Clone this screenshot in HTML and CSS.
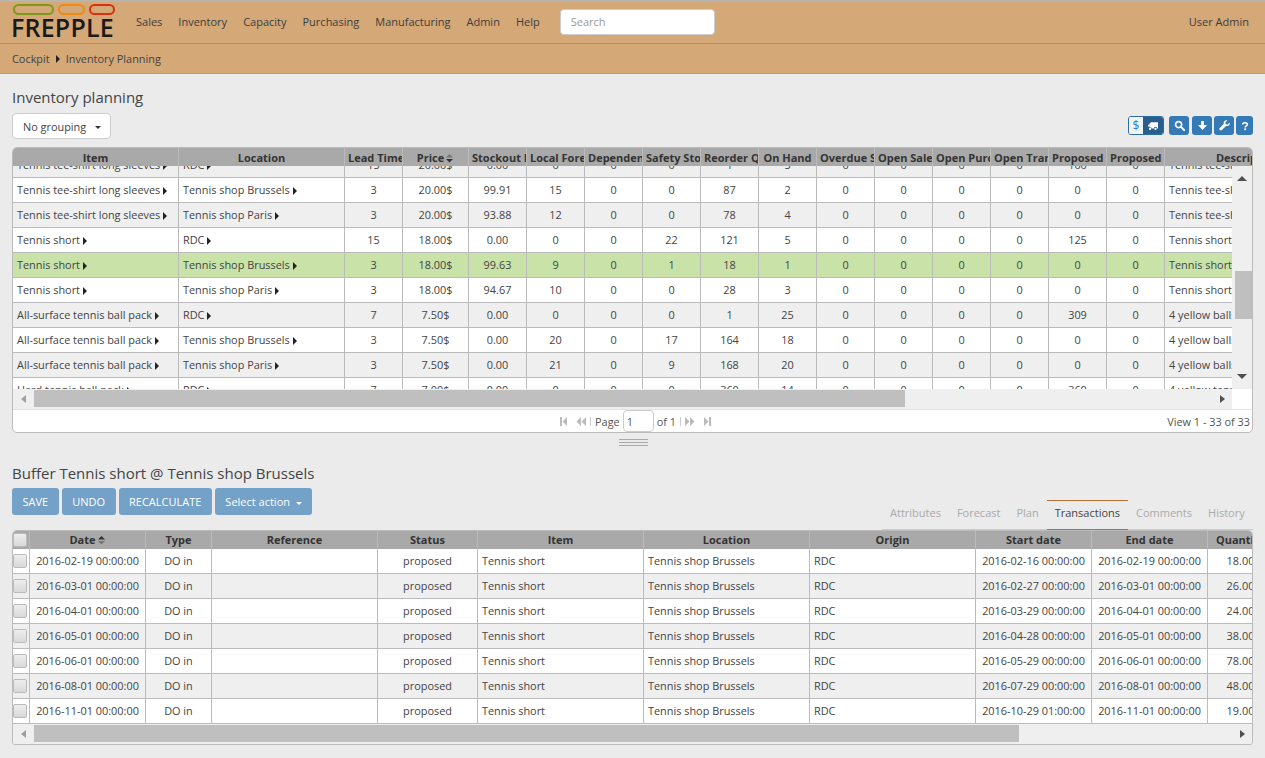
FILE: index.html
```html
<!DOCTYPE html>
<html lang="en">
<head>
    <meta charset="UTF-8">
    <title>Inventory planning</title>
    <link rel="stylesheet" href="styles.css">
</head>
<body>
    <header class="topbar">
        <nav class="navbar">
            <a class="logo">
                <span class="logo-pills"><i class="pill green"></i><i class="pill orange"></i><i class="pill red"></i></span>
                <span class="logo-text">FREPPLE</span>
            </a>
            <a class="nav-link">Sales</a>
            <a class="nav-link">Inventory</a>
            <a class="nav-link">Capacity</a>
            <a class="nav-link">Purchasing</a>
            <a class="nav-link">Manufacturing</a>
            <a class="nav-link">Admin</a>
            <a class="nav-link">Help</a>
            <input class="search" type="text" placeholder="Search">
            <a class="nav-user">User Admin</a>
        </nav>
        <div class="breadcrumb">
            <span>Cockpit</span>
            <i class="more"></i>
            <span>Inventory Planning</span>
        </div>
    </header>

    <main class="content">
        <h1 class="title">Inventory planning</h1>
        <div class="toolbar">
            <button class="btn-default">No grouping <i class="caret"></i></button>
            <div class="actions">
                <div class="toggle">
                    <span class="toggle-off">$</span>
                    <span class="toggle-on">
                        <svg width="12" height="10" viewBox="0 0 14 12"><path fill="#fff" d="M4 1.500h9v7.500h-1a2 2 0 0 0-4 0H5.500a2 2 0 0 0-2.500-1.200V6.500H1V5l2-2h1zM3 3.800 1.800 5H3zM3.500 8a1.400 1.400 0 1 1 0 2.800 1.400 1.400 0 0 1 0-2.800zM10 8a1.400 1.400 0 1 1 0 2.800A1.400 1.400 0 0 1 10 8z"/></svg>
                    </span>
                </div>
                <span class="icon-btn wide search-btn">
                    <svg width="11" height="11" viewBox="0 0 12 12"><circle cx="5" cy="5" r="3.300" fill="none" stroke="#fff" stroke-width="1.800"/><path d="M7.500 7.500 11 11" stroke="#fff" stroke-width="2.200" stroke-linecap="round"/></svg>
                </span>
                <span class="icon-btn wide">
                    <svg width="11" height="11" viewBox="0 0 12 12"><path fill="#fff" d="M4.500 1h3v4.500H11L6 11 1 5.500h3.500z"/></svg>
                </span>
                <span class="icon-btn wide">
                    <svg width="11" height="11" viewBox="0 0 12 12"><path fill="#fff" d="M11.500 2.800 9.400 4.900 7.400 4.500 7 2.600 9.100.5C7.500-.1 5.600.8 5.200 2.400c-.1.600-.1 1.200.1 1.800L.8 8.700c-.6.600-.6 1.600 0 2.200.6.700 1.700.7 2.300.1l4.600-4.500c1.900.6 3.700-.4 4-2.100.1-.5 0-1.100-.2-1.600z"/></svg>
                </span>
                <span class="icon-btn">
                    <svg width="8" height="10" viewBox="0 0 10 12"><path fill="none" stroke="#fff" stroke-width="2" d="M2 4.200C2 2.700 3.300 2 5 2s3 .8 3 2.200C8 6 5.200 5.800 5.200 7.800"/><rect x="4" y="9" width="2.400" height="2.200" fill="#fff"/></svg>
                </span>
            </div>
        </div>

        <section class="grid">
            <table class="grid-table grid-head top-table">
                <colgroup><col class="c-name"><col class="c-name"><col class="c-lead"><col class="c-price"><col class="c-num"><col class="c-num"><col class="c-num"><col class="c-num"><col class="c-num"><col class="c-num"><col class="c-num"><col class="c-num"><col class="c-num"><col class="c-num"><col class="c-num"><col class="c-num"><col class="c-name"></colgroup>
                <tr>
                    <th>Item</th><th>Location</th><th>Lead Time</th>
                    <th>Price<svg class="sort" width="9" height="9" viewBox="0 0 9 9"><path fill="#777" d="M1 3.500 4.500 0 8 3.500z"/><path fill="#333" d="M1 5h7L4.500 8.500z"/></svg></th>
                    <th>Stockout Probability</th><th>Local Forecast</th><th>Dependent Demand</th><th>Safety Stock</th><th>Reorder Quantity</th><th>On Hand</th><th>Overdue Sales</th><th>Open Sales</th><th>Open Purchases</th><th>Open Transfers</th><th>Proposed</th><th>Proposed</th><th>Description</th>
                </tr>
            </table>
            <div class="grid-body">
                <div class="viewport">
                    <table class="grid-table top-table scrolled">
                        <colgroup><col class="c-name"><col class="c-name"><col class="c-lead"><col class="c-price"><col class="c-num"><col class="c-num"><col class="c-num"><col class="c-num"><col class="c-num"><col class="c-num"><col class="c-num"><col class="c-num"><col class="c-num"><col class="c-num"><col class="c-num"><col class="c-num"><col class="c-name"></colgroup>
                        <tr class="alt"><td class="left">Tennis tee-shirt long sleeves <i class="more"></i></td><td class="left">RDC <i class="more"></i></td><td>15</td><td>20.00$</td><td>0.00</td><td>0</td><td>0</td><td>0</td><td>1</td><td>5</td><td>0</td><td>0</td><td>0</td><td>0</td><td>100</td><td>0</td><td class="left">Tennis tee-shirt long sleeves</td></tr>
                        <tr><td class="left">Tennis tee-shirt long sleeves <i class="more"></i></td><td class="left">Tennis shop Brussels <i class="more"></i></td><td>3</td><td>20.00$</td><td>99.91</td><td>15</td><td>0</td><td>0</td><td>87</td><td>2</td><td>0</td><td>0</td><td>0</td><td>0</td><td>0</td><td>0</td><td class="left">Tennis tee-shirt long sleeves</td></tr>
                        <tr class="alt"><td class="left">Tennis tee-shirt long sleeves <i class="more"></i></td><td class="left">Tennis shop Paris <i class="more"></i></td><td>3</td><td>20.00$</td><td>93.88</td><td>12</td><td>0</td><td>0</td><td>78</td><td>4</td><td>0</td><td>0</td><td>0</td><td>0</td><td>0</td><td>0</td><td class="left">Tennis tee-shirt long sleeves</td></tr>
                        <tr><td class="left">Tennis short <i class="more"></i></td><td class="left">RDC <i class="more"></i></td><td>15</td><td>18.00$</td><td>0.00</td><td>0</td><td>0</td><td>22</td><td>121</td><td>5</td><td>0</td><td>0</td><td>0</td><td>0</td><td>125</td><td>0</td><td class="left">Tennis short</td></tr>
                        <tr class="selected"><td class="left">Tennis short <i class="more"></i></td><td class="left">Tennis shop Brussels <i class="more"></i></td><td>3</td><td>18.00$</td><td>99.63</td><td>9</td><td>0</td><td>1</td><td>18</td><td>1</td><td>0</td><td>0</td><td>0</td><td>0</td><td>0</td><td>0</td><td class="left">Tennis short</td></tr>
                        <tr><td class="left">Tennis short <i class="more"></i></td><td class="left">Tennis shop Paris <i class="more"></i></td><td>3</td><td>18.00$</td><td>94.67</td><td>10</td><td>0</td><td>0</td><td>28</td><td>3</td><td>0</td><td>0</td><td>0</td><td>0</td><td>0</td><td>0</td><td class="left">Tennis short</td></tr>
                        <tr class="alt"><td class="left">All-surface tennis ball pack <i class="more"></i></td><td class="left">RDC <i class="more"></i></td><td>7</td><td>7.50$</td><td>0.00</td><td>0</td><td>0</td><td>0</td><td>1</td><td>25</td><td>0</td><td>0</td><td>0</td><td>0</td><td>309</td><td>0</td><td class="left">4 yellow balls in a pack</td></tr>
                        <tr><td class="left">All-surface tennis ball pack <i class="more"></i></td><td class="left">Tennis shop Brussels <i class="more"></i></td><td>3</td><td>7.50$</td><td>0.00</td><td>20</td><td>0</td><td>17</td><td>164</td><td>18</td><td>0</td><td>0</td><td>0</td><td>0</td><td>0</td><td>0</td><td class="left">4 yellow balls in a pack</td></tr>
                        <tr class="alt"><td class="left">All-surface tennis ball pack <i class="more"></i></td><td class="left">Tennis shop Paris <i class="more"></i></td><td>3</td><td>7.50$</td><td>0.00</td><td>21</td><td>0</td><td>9</td><td>168</td><td>20</td><td>0</td><td>0</td><td>0</td><td>0</td><td>0</td><td>0</td><td class="left">4 yellow balls in a pack</td></tr>
                        <tr><td class="left">Hard tennis ball pack <i class="more"></i></td><td class="left">RDC <i class="more"></i></td><td>7</td><td>7.00$</td><td>0.00</td><td>0</td><td>0</td><td>0</td><td>360</td><td>14</td><td>0</td><td>0</td><td>0</td><td>0</td><td>360</td><td>0</td><td class="left">4 yellow tennis balls</td></tr>
                    </table>
                </div>
                <div class="vbar">
                    <span class="sb-btn"><i class="arrow up"></i></span>
                    <span class="vthumb"></span>
                    <span class="sb-btn end"><i class="arrow down"></i></span>
                </div>
            </div>
            <div class="hrow">
                <div class="hbar">
                    <span class="sb-btn side"><i class="arrow left"></i></span>
                    <span class="hthumb top-thumb"></span>
                    <span class="sb-btn side end-x"><i class="arrow right"></i></span>
                </div>
                <div class="corner"></div>
            </div>
            <div class="pager">
                <span></span>
                <div class="pager-center">
                    <svg width="7" height="9" viewBox="0 0 7 9"><path fill="#bbb" d="M0 0h2v9H0zM7 0v9L2.500 4.500z"/></svg>
                    <svg class="gap-l" width="10" height="9" viewBox="0 0 10 9"><path fill="#bbb" d="M5 0v9L.5 4.500zM10 0v9L5.500 4.500z"/></svg>
                    <i class="pager-sep"></i>
                    <span>Page</span>
                    <input class="page-input" type="text" value="1">
                    <span>of 1</span>
                    <i class="pager-sep"></i>
                    <svg width="10" height="9" viewBox="0 0 10 9"><path fill="#bbb" d="M0 0v9l4.500-4.500zM5 0v9l4.500-4.500z"/></svg>
                    <svg class="gap-l" width="7" height="9" viewBox="0 0 7 9"><path fill="#bbb" d="M0 0v9l4.500-4.500zM5 0h2v9H5z"/></svg>
                </div>
                <span class="pager-info">View 1 - 33 of 33</span>
            </div>
        </section>

        <div class="splitter"></div>

        <h2 class="title">Buffer Tennis short @ Tennis shop Brussels</h2>
        <div class="detail-bar">
            <div class="buttons">
                <button class="btn-primary">SAVE</button>
                <button class="btn-primary">UNDO</button>
                <button class="btn-primary">RECALCULATE</button>
                <button class="btn-primary">Select action <i class="caret white"></i></button>
            </div>
            <ul class="tabs">
                <li>Attributes</li>
                <li>Forecast</li>
                <li>Plan</li>
                <li class="active">Transactions</li>
                <li>Comments</li>
                <li>History</li>
            </ul>
        </div>

        <section class="grid detail">
            <table class="grid-table grid-head detail-table">
                <colgroup><col class="c-check"><col class="c-date"><col class="c-type"><col class="c-name"><col class="c-status"><col class="c-name"><col class="c-name"><col class="c-name"><col class="c-date"><col class="c-date"><col class="c-type"></colgroup>
                <tr>
                    <th class="check-cell"><i class="checkbox"></i></th>
                    <th>Date<svg class="sort" width="9" height="9" viewBox="0 0 9 9"><path fill="#333" d="M1 3.500 4.500 0 8 3.500z"/><path fill="#777" d="M1 5h7L4.500 8.500z"/></svg></th>
                    <th>Type</th><th>Reference</th><th>Status</th><th>Item</th><th>Location</th><th>Origin</th><th>Start date</th><th>End date</th><th>Quantity</th>
                </tr>
            </table>
            <table class="grid-table detail-table">
                <colgroup><col class="c-check"><col class="c-date"><col class="c-type"><col class="c-name"><col class="c-status"><col class="c-name"><col class="c-name"><col class="c-name"><col class="c-date"><col class="c-date"><col class="c-type"></colgroup>
                <tr><td class="check-cell"><i class="checkbox"></i></td><td>2016-02-19 00:00:00</td><td>DO in</td><td></td><td>proposed</td><td class="left">Tennis short</td><td class="left">Tennis shop Brussels</td><td class="left">RDC</td><td>2016-02-16 00:00:00</td><td>2016-02-19 00:00:00</td><td>18.00</td></tr>
                <tr class="alt"><td class="check-cell"><i class="checkbox"></i></td><td>2016-03-01 00:00:00</td><td>DO in</td><td></td><td>proposed</td><td class="left">Tennis short</td><td class="left">Tennis shop Brussels</td><td class="left">RDC</td><td>2016-02-27 00:00:00</td><td>2016-03-01 00:00:00</td><td>26.00</td></tr>
                <tr><td class="check-cell"><i class="checkbox"></i></td><td>2016-04-01 00:00:00</td><td>DO in</td><td></td><td>proposed</td><td class="left">Tennis short</td><td class="left">Tennis shop Brussels</td><td class="left">RDC</td><td>2016-03-29 00:00:00</td><td>2016-04-01 00:00:00</td><td>24.00</td></tr>
                <tr class="alt"><td class="check-cell"><i class="checkbox"></i></td><td>2016-05-01 00:00:00</td><td>DO in</td><td></td><td>proposed</td><td class="left">Tennis short</td><td class="left">Tennis shop Brussels</td><td class="left">RDC</td><td>2016-04-28 00:00:00</td><td>2016-05-01 00:00:00</td><td>38.00</td></tr>
                <tr><td class="check-cell"><i class="checkbox"></i></td><td>2016-06-01 00:00:00</td><td>DO in</td><td></td><td>proposed</td><td class="left">Tennis short</td><td class="left">Tennis shop Brussels</td><td class="left">RDC</td><td>2016-05-29 00:00:00</td><td>2016-06-01 00:00:00</td><td>78.00</td></tr>
                <tr class="alt"><td class="check-cell"><i class="checkbox"></i></td><td>2016-08-01 00:00:00</td><td>DO in</td><td></td><td>proposed</td><td class="left">Tennis short</td><td class="left">Tennis shop Brussels</td><td class="left">RDC</td><td>2016-07-29 00:00:00</td><td>2016-08-01 00:00:00</td><td>48.00</td></tr>
                <tr><td class="check-cell"><i class="checkbox"></i></td><td>2016-11-01 00:00:00</td><td>DO in</td><td></td><td>proposed</td><td class="left">Tennis short</td><td class="left">Tennis shop Brussels</td><td class="left">RDC</td><td>2016-10-29 01:00:00</td><td>2016-11-01 00:00:00</td><td>19.00</td></tr>
            </table>
            <div class="hbar full">
                <span class="sb-btn side"><i class="arrow left"></i></span>
                <span class="hthumb detail-thumb"></span>
                <span class="sb-btn side end-x"><i class="arrow right"></i></span>
            </div>
        </section>
    </main>
</body>
</html>
```

FILE: styles.css
```css
* {
    box-sizing: border-box;
}

body {
    margin: 0;
    height: 758px;
    overflow: hidden;
    background: #ebebeb;
    color: #333;
    font-family: "Open Sans", "Liberation Sans", sans-serif;
    font-size: 10.9px;
}

/* top bar */
.topbar {
    background: #d4a877;
    border-top: 2px solid #b8b4ae;
}

.navbar {
    display: flex;
    align-items: center;
    height: 42px;
    padding: 0 16px 2px 12px;
    border-bottom: 1px solid #c68b4f;
    font-size: 11px;
}

.logo {
    display: flex;
    flex-direction: column;
    width: 103px;
    margin-right: 21px;
}

.logo-pills {
    display: flex;
    gap: 4px;
    padding-left: 1px;
    height: 11px;
    margin-bottom: 1px;
}

.pill {
    display: block;
    height: 11px;
    border-radius: 6px;
    border: 2px solid;
}

.pill.green { width: 41px; border-color: #7c9a1a; }
.pill.orange { width: 28px; border-color: #ef8a12; }
.pill.red { width: 26px; border-color: #d9310f; }

.logo-text {
    margin-left: -1px;
    font-family: "Open Sans", sans-serif;
    font-size: 25px;
    font-weight: 600;
    line-height: 23px;
    letter-spacing: .2px;
    color: #1a1a1a;
}

.nav-link {
    margin-right: 16px;
    color: #3d3d3d;
}

.search {
    width: 155px;
    height: 26px;
    margin-left: 4px;
    padding: 0 10px;
    border: 1px solid #ccc;
    border-radius: 4px;
    background: #fff;
    font: inherit;
}

.search::placeholder {
    color: #999;
}

.nav-user {
    margin-left: auto;
    color: #3d3d3d;
}

.breadcrumb {
    display: flex;
    align-items: center;
    gap: 6px;
    height: 30px;
    padding-left: 12px;
    border-bottom: 1px solid #d09a5f;
    color: #444;
}

.more {
    display: inline-block;
    width: 0;
    height: 0;
    border-left: 4px solid #222;
    border-top: 4px solid transparent;
    border-bottom: 4px solid transparent;
    vertical-align: -1px;
}

/* page */
.content {
    padding: 0 12px;
}

.title {
    margin: 0;
    font-size: 15px;
    font-weight: 400;
    line-height: 20px;
    color: #444;
}

h1.title {
    padding-top: 13px;
    margin-bottom: 6px;
}

h2.title {
    margin-bottom: 5px;
}

.toolbar {
    display: flex;
    justify-content: space-between;
    height: 26px;
    margin-bottom: 8px;
}

button {
    font: inherit;
}

.btn-default {
    width: 99px;
    height: 26px;
    padding: 0 0 0 10px;
    border: 1px solid #ccc;
    border-radius: 4px;
    background: #fff;
    color: #444;
    text-align: left;
}

.caret {
    display: inline-block;
    width: 0;
    height: 0;
    margin-left: 6px;
    border-top: 3px solid #333;
    border-left: 3px solid transparent;
    border-right: 3px solid transparent;
    vertical-align: middle;
}

.caret.white {
    margin-left: 3px;
    border-top-color: #fff;
}

.actions {
    display: flex;
    align-items: flex-start;
    gap: 2px;
    margin-top: 3px;
}

.toggle {
    display: flex;
    height: 19px;
    margin-right: 3px;
    border: 1px solid #2e6da4;
    border-radius: 3px;
    overflow: hidden;
}

.toggle-off {
    width: 14px;
    background: #f2f5f8;
    color: #337ab7;
    font-size: 12px;
    line-height: 17px;
    text-align: center;
}

.toggle-on {
    display: flex;
    align-items: center;
    justify-content: center;
    width: 20px;
    background: #285e8e;
}

.icon-btn {
    display: flex;
    align-items: center;
    justify-content: center;
    width: 17px;
    height: 19px;
    background: #337ab7;
    border-radius: 3px;
}

.icon-btn.wide {
    width: 20px;
}

.search-btn {
    margin-right: 1px;
}

/* grids */
.grid {
    width: 1241px;
    border: 1px solid #bbb;
    border-radius: 5px;
    background: #fff;
    overflow: hidden;
}

.grid-table {
    border-collapse: separate;
    border-spacing: 0;
    table-layout: fixed;
}

.top-table { width: 1318px; }
.detail-table { width: 1261px; }

.c-name { width: 166px; }
.c-lead { width: 58px; }
.c-price { width: 66px; }
.c-num { width: 58px; }
.c-check { width: 17px; }
.c-date { width: 116px; }
.c-type { width: 66px; }
.c-status { width: 100px; }

.grid-table th {
    height: 18px;
    padding: 0 3px;
    background: #a9a9a9;
    border-right: 1px solid #bbb;
    color: #333;
    font-size: 11px;
    font-weight: 700;
    line-height: 18px;
    white-space: nowrap;
    overflow: hidden;
}

.top-table th {
    padding-top: 1px;
    line-height: 17px;
}

.grid-table td {
    height: 25px;
    padding: 0 3px 2px 3px;
    background: #fff;
    border-right: 1px solid #bbb;
    border-bottom: 1px solid #bbb;
    color: #444;
    text-align: center;
    white-space: nowrap;
    overflow: hidden;
}

.grid-table tr.alt td {
    background: #efefef;
}

.grid-table tr.selected td {
    background: #c8e2a8;
}

.grid-table td.left {
    padding-left: 4px;
    text-align: left;
}

.grid-table .check-cell {
    padding: 0;
    text-align: left;
}

.checkbox {
    display: block;
    width: 14px;
    height: 14px;
    border: 1px solid #bbb;
    border-radius: 2px;
    background: linear-gradient(#eee, #d8d8d8);
}

.sort {
    margin-left: 1px;
    vertical-align: -1px;
}

.grid-body {
    display: flex;
    height: 223px;
}

.viewport {
    width: 1219px;
    overflow: hidden;
}

.scrolled {
    margin-top: -13px;
}

/* hand drawn scrollbars */
.vbar {
    display: flex;
    flex-direction: column;
    width: 20px;
    background: #efefef;
}

.sb-btn {
    display: flex;
    align-items: center;
    justify-content: center;
    height: 24px;
    flex: none;
}

.sb-btn.end {
    margin-top: auto;
    margin-bottom: 1px;
}

.sb-btn.side {
    width: 21px;
    height: 20px;
}

.sb-btn.end-x {
    width: 20px;
    margin-left: auto;
}

.vthumb {
    width: 17px;
    height: 48px;
    margin: 81px 0 0 3px;
    background: #bfbfbf;
}

.arrow {
    display: block;
    width: 0;
    height: 0;
    border-style: solid;
    border-color: transparent;
}

.arrow.up { border-width: 0 5px 5px; border-bottom-color: #505050; }
.arrow.down { border-width: 5px 5px 0; border-top-color: #505050; }
.arrow.left { border-width: 4.500px 5px 4.500px 0; border-right-color: #a0a0a0; }
.arrow.right { border-width: 4.500px 0 4.500px 5px; border-left-color: #505050; }

.hrow {
    display: flex;
    height: 20px;
}

.hbar {
    display: flex;
    width: 1219px;
    height: 20px;
    background: #efefef;
}

.hbar.full {
    width: 100%;
}

.corner {
    width: 20px;
    background: #fff;
}

.hthumb {
    height: 17px;
    margin-top: 1px;
    background: #bfbfbf;
}

.top-thumb { width: 871px; }
.detail-thumb { width: 985px; }

.pager {
    display: grid;
    grid-template-columns: 1fr auto 1fr;
    align-items: center;
    height: 23px;
    border-top: 1px solid #e4e4e4;
    color: #555;
}

.pager-center {
    display: flex;
    align-items: center;
    gap: 3px;
    margin-left: 6px;
}

.pager-center .gap-l {
    margin-left: 6px;
}

.pager-sep {
    width: 1px;
    height: 9px;
    margin: 0 1px;
    background: #ccc;
}

.page-input {
    width: 31px;
    height: 22px;
    padding: 0 3px;
    border: 1px solid #ccc;
    border-radius: 4px;
    font: inherit;
    color: #555;
}

.pager-info {
    justify-self: end;
    padding-right: 2px;
}

.splitter {
    width: 29px;
    height: 7px;
    margin: 6px 0 17px 607px;
    border-top: 1px solid #aaa;
    border-bottom: 1px solid #aaa;
    background: linear-gradient(#eaeaea 2px, #aaa 2px, #aaa 3px, #eaeaea 3px);
}

/* detail panel */
.detail-bar {
    display: flex;
    justify-content: space-between;
    height: 42px;
}

.buttons {
    display: flex;
    gap: 3px;
    height: 27px;
}

.btn-primary {
    height: 27px;
    padding: 0 10.500px;
    border: none;
    border-radius: 3px;
    background: #74a1c8;
    color: #fff;
    font-size: 11px;
}

.tabs {
    display: flex;
    align-self: flex-end;
    width: 371px;
    height: 30px;
    margin: 0;
    padding: 0;
    list-style: none;
    border-bottom: 1px solid #ccc;
    color: #aaa;
}

.tabs li {
    height: 30px;
    padding: 0 8px;
    border-top: 1px solid transparent;
    border-bottom: 1px solid transparent;
    font-size: 11px;
    line-height: 23px;
}

.tabs li.active {
    border-color: #b87333;
    color: #444;
}

.grid.detail {
    background: #efefef;
    border-radius: 5px 5px 3px 3px;
}
```
